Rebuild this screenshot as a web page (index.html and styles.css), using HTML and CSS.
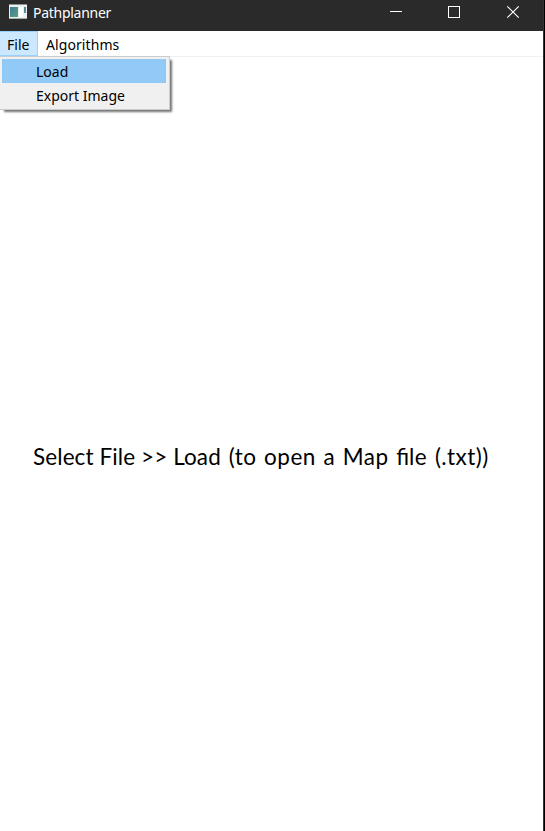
FILE: index.html
```html
<!DOCTYPE html>
<html lang="en">
<head>
<meta charset="utf-8">
<title>Pathplanner</title>
<link rel="stylesheet" href="styles.css">
</head>
<body>
<div class="window">
  <header class="titlebar">
    <svg class="app-icon" width="18" height="15" viewBox="0 0 18 15">
      <defs><linearGradient id="g" x1="0" y1="0" x2="1" y2="1"><stop offset="0" stop-color="#4078a0"/><stop offset="1" stop-color="#58a578"/></linearGradient></defs>
      <rect width="18" height="15" fill="#eceef0"/>
      <rect width="18" height="1" fill="#8b9298"/>
      <rect y="14" width="18" height="1" fill="#a9adb0"/>
      <rect x="1" y="3" width="8" height="10" fill="url(#g)"/>
      <rect x="10" y="3" width="4" height="10" fill="#fff"/>
      <rect x="15" y="3" width="2" height="6" fill="url(#g)"/>
    </svg>
    <span class="title">Pathplanner</span>
    <div class="controls">
      <svg width="58" height="30" viewBox="0 0 58 30"><path d="M23 11.5h12" stroke="#fff"/></svg>
      <svg width="58" height="30" viewBox="0 0 58 30"><rect x="23.5" y="6.5" width="11" height="11" fill="none" stroke="#fff"/></svg>
      <svg width="60" height="30" viewBox="0 0 60 30"><path d="M24.3 6.3l11.4 11.4M35.7 6.3L24.3 17.7" stroke="#fff" stroke-width="1.2"/></svg>
    </div>
  </header>
  <nav class="menubar">
    <div class="menu-item open">File
      <div class="dropdown">
        <div class="option selected">Load</div>
        <div class="option">Export Image</div>
      </div>
    </div>
    <div class="menu-item algorithms">Algorithms</div>
  </nav>
  <main class="canvas"><p class="hint">Select File &gt;&gt; Load <span class="detail">(to open a Map <span class="ligature">fi</span>le (.txt))</span></p></main>
</div>
</body>
</html>
```
FILE: styles.css
```css
* { box-sizing: border-box; }
body { margin: 0; background: #000; font-family: "Noto Sans", sans-serif; font-size: 14px; color: #000; }
.window { width: 544px; height: 831px; display: flex; flex-direction: column; background: #fff; border-right: 1px solid #343434; }
.titlebar { height: 31px; flex: none; background: #2a2a2a; color: #fff; display: flex; align-items: flex-start; padding-left: 9px; }
.app-icon { margin-top: 4px; }
.title { margin-left: 6px; line-height: 26px; flex: 1; font-size: 14px; letter-spacing: -0.28px; }
.controls { display: flex; }
.controls svg { display: block; }
.menubar { height: 26px; flex: none; display: flex; border-bottom: 1px solid #f0f0f0; }
.menu-item { position: relative; height: 25px; line-height: 27px; }
.open { width: 38px; padding-left: 7px; line-height: 25px; background: #cce8ff; border: 1px solid #99d1ff; border-left: 0; }
.algorithms { padding-left: 8px; letter-spacing: 0.08px; }
.dropdown { position: absolute; z-index: 1; top: 24px; left: 0; width: 170px; height: 54px; padding: 2px 3px 2px 2px; background: #f0f0f0; border: 1px solid #ccc; border-left: 0; box-shadow: 3px 3px 2px -1px rgba(0,0,0,.55); }
.option { height: 24px; line-height: 25px; padding-left: 34px; white-space: nowrap; }
.selected { background: #91c9f7; }
.canvas { flex: 1; padding: 383px 0 0 33px; }
.hint { margin: 0; font-family: Lato, sans-serif; font-size: 22.5px; line-height: 34px; white-space: nowrap; letter-spacing: 0.1px; }
.detail { margin-left: 2px; letter-spacing: 0.45px; word-spacing: 1.5px; }
.ligature { letter-spacing: 0; }
```
